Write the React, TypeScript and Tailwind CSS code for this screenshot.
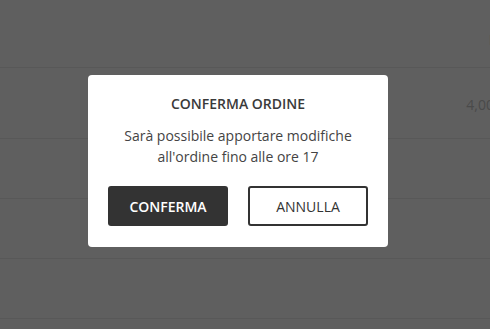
import React from "react";

function App(): JSX.Element {
  return (
    <div
      className="relative w-[490px] h-[329px] overflow-hidden bg-[#5f5f5f]"
      style={{ fontFamily: '"Open Sans", "Liberation Sans", sans-serif' }}
    >
      {/* table below the overlay */}
      <div className="flex flex-col">
        <div className="h-[68px] border-b border-[#585858] flex justify-end items-center">
          <span className="text-[14px] font-semibold text-[#4b4b4b] mr-[-3px] mt-[12px]">I</span>
        </div>
        <div className="h-[71px] border-b border-[#585858] flex justify-end">
          <span className="text-[14px] text-[#4a4a4a] mt-[26px] mr-[-4px]">4,00</span>
        </div>
        {[0, 1, 2].map((i) => (
          <div key={i} className="h-[60px] border-b border-[#585858]" />
        ))}
      </div>

      {/* confirm modal */}
      <div className="absolute left-[88px] top-[75px] w-[300px] h-[172px] bg-white rounded-[4px] flex flex-col items-center pt-[19px]">
        <h2 className="text-[14px] font-semibold text-[#3a3a3a] leading-[20px]">
          CONFERMA ORDINE
        </h2>
        <p className="mt-[11px] text-[14px] text-[#444] leading-[21px] text-center">
          Sarà possibile apportare modifiche
          <br />
          all'ordine fino alle ore 17
        </p>
        <div className="mt-[19px] flex gap-[20px]">
          <button className="w-[120px] h-[40px] rounded-[3px] bg-[#333] text-white text-[14px] font-semibold">
            CONFERMA
          </button>
          <button className="w-[120px] h-[40px] rounded-[3px] border-2 border-[#333] bg-white text-[#333] text-[14px]">
            ANNULLA
          </button>
        </div>
      </div>
    </div>
  );
}

export default App;
